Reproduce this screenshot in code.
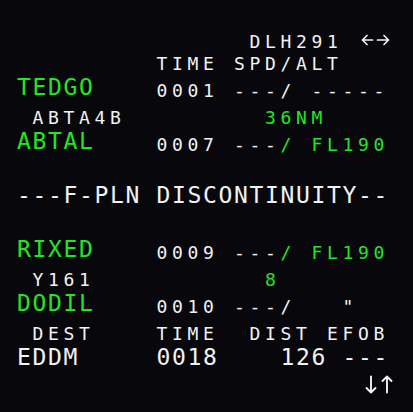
import React from 'react';

const G = 'text-[#22e622]';
const W = 'text-[#f2f2f2]';

function S({ c = W, low, children }) {
  return (
    <span className={`${c} text-[18px] leading-[27px] tracking-[4.66px] ${low ? 'align-[-2px]' : ''}`}>
      {children}
    </span>
  );
}

function L({ c = W, children }) {
  return <span className={`${c} text-[23px] leading-[27px] tracking-[1.65px]`}>{children}</span>;
}

function Row({ h, children }) {
  return <div className={`${h} whitespace-pre text-[23px] leading-[27px] overflow-visible`}>{children}</div>;
}

// left/right arrows next to the flight number
function SideArrows() {
  return (
    <svg width="31" height="27" viewBox="0 0 31 27" className="inline-block align-top overflow-visible" fill="none" stroke="#f2f2f2" strokeWidth="1.7" strokeLinecap="round" strokeLinejoin="round">
      <path d="M4.5 13h10M9 8.5l-4.5 4.5 4.5 4.5" />
      <path d="M19.5 13h11M26 8.5l4.5 4.5-4.5 4.5" />
    </svg>
  );
}

// down/up scroll arrows
function ScrollArrows() {
  return (
    <svg width="31" height="27" viewBox="0 0 31 27" className="inline-block align-top overflow-visible" fill="none" stroke="#f2f2f2" strokeWidth="1.9" strokeLinecap="round" strokeLinejoin="round">
      <path d="M13 7.5v16M8.5 19L13 23.5l4.5-4.5" />
      <path d="M29 7.5v16M24.5 12L29 7.5l4.5 4.5" />
    </svg>
  );
}

export default function App() {
  return (
    <div
      className="w-[413px] h-[412px] bg-[#08080c] pt-[27px] pl-[17px] overflow-hidden"
      style={{ fontFamily: '"DejaVu Sans Mono", "Liberation Mono", monospace' }}
    >
      <Row h="h-[22px]">
        <S>{'               DLH291 '}</S>
        <SideArrows />
      </Row>
      <Row h="h-[25px]">
        <S>{'         TIME SPD/ALT'}</S>
      </Row>
      <Row h="h-[29px]">
        <L c={G}>TEDGO</L>
        <S low>{'    0001 ---/ -----'}</S>
      </Row>
      <Row h="h-[25px]">
        <S>{' ABTA4B'}</S>
        <S c={G}>{'         36NM'}</S>
      </Row>
      <Row h="h-[29px]">
        <L c={G}>ABTAL</L>
        <S low>{'    0007 ---'}</S>
        <S c={G} low>{'/ FL190'}</S>
      </Row>
      <Row h="h-[25px]">{' '}</Row>
      <Row h="h-[29px]">
        <L>---F-PLN DISCONTINUITY--</L>
      </Row>
      <Row h="h-[25px]">{' '}</Row>
      <Row h="h-[29px]">
        <L c={G}>RIXED</L>
        <S low>{'    0009 ---'}</S>
        <S c={G} low>{'/ FL190'}</S>
      </Row>
      <Row h="h-[25px]">
        <S>{' Y161'}</S>
        <S c={G}>{'           8'}</S>
      </Row>
      <Row h="h-[29px]">
        <L c={G}>DODIL</L>
        <S low>{'    0010 ---/   "'}</S>
      </Row>
      <Row h="h-[25px]">
        <S>{' DEST    TIME  DIST EFOB'}</S>
      </Row>
      <Row h="h-[25px]">
        <L>{'EDDM     0018    126 ---'}</L>
      </Row>
      <Row h="h-[25px]">
        <L>{'                      '}</L>
        <ScrollArrows />
      </Row>
    </div>
  );
}
